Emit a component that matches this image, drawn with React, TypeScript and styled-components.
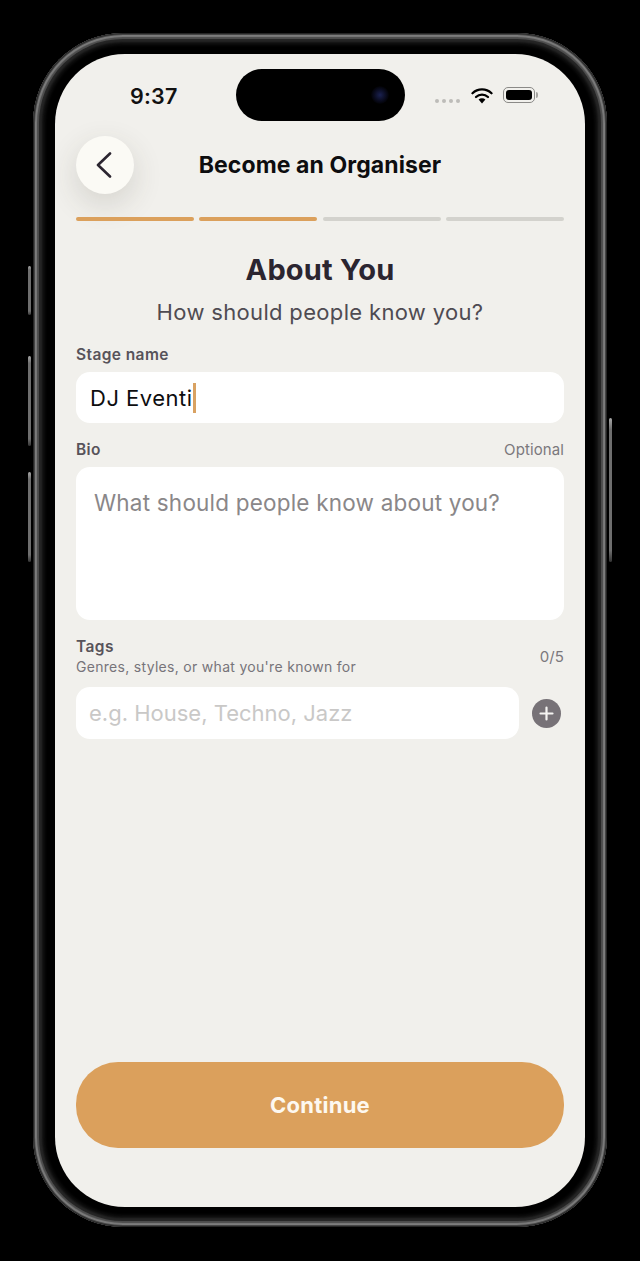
import React from "react";
import styled, { createGlobalStyle } from "styled-components";

const GlobalStyle = createGlobalStyle`
  html, body {
    margin: 0;
    padding: 0;
    background: #000;
    overflow: hidden;
  }
  * {
    box-sizing: border-box;
  }
`;

const Page = styled.div`
  width: 640px;
  height: 1261px;
  padding-top: 33px;
  background: #000;
  font-family: "Inter", "Liberation Sans", sans-serif;
`;

const Frame = styled.div`
  position: relative;
  width: 574px;
  height: 1194px;
  margin: 0 auto;
  padding: 21px 22px 20px;
  border-radius: 90px;
  background: #000;
  box-shadow:
    inset 0 0 1px 1px #222,
    inset 0 0 0 2px #4a4a4a,
    inset 0 0 1px 4px #7c7c7c,
    inset 0 0 0 6px #4c4c4c,
    inset 0 0 2px 9px #262626,
    inset 0 0 3px 12px #101010;
`;

const SideButton = styled.div<{ $side: "left" | "right"; $top: number; $height: number }>`
  position: absolute;
  top: ${(p) => p.$top}px;
  ${(p) => (p.$side === "left" ? "left: -5px;" : "right: -5px;")}
  width: 3px;
  height: ${(p) => p.$height}px;
  border-radius: 2px;
  background: linear-gradient(180deg, #a8a8a8 0, #6e6e6e 8%, #6e6e6e 92%, #333 100%);
`;

const Screen = styled.div`
  position: relative;
  display: flex;
  flex-direction: column;
  height: 100%;
  border-radius: 70px;
  background: #f1f0ec;
  overflow: hidden;
`;

const Island = styled.div`
  position: absolute;
  top: 15px;
  left: 181px;
  width: 169px;
  height: 52px;
  border-radius: 26px;
  background: #000;
`;

const Lens = styled.div`
  position: absolute;
  top: 17px;
  right: 16px;
  width: 18px;
  height: 18px;
  border-radius: 50%;
  background: radial-gradient(circle, #1a2150 0, #0a0c20 45%, #000 75%);
`;

const StatusBar = styled.div`
  display: flex;
  align-items: center;
  height: 82px;
  padding: 2px 50px 0 75px;
`;

const Time = styled.div`
  font-size: 21.5px;
  font-weight: 600;
  color: #111;
  letter-spacing: 0.2px;
`;

const StatusIcons = styled.div`
  display: flex;
  align-items: center;
  margin-left: auto;
  margin-top: -2px;
`;

const SignalDots = styled.div`
  display: flex;
  gap: 2.5px;
  margin-top: 12px;
  margin-right: 11px;
`;

const SignalDot = styled.div`
  width: 4.5px;
  height: 4.5px;
  border-radius: 50%;
  background: #bdbcb9;
`;

const Battery = styled.div`
  position: relative;
  width: 32px;
  height: 16px;
  margin-left: 10px;
  padding: 2px;
  border: 1px solid #8b8a87;
  border-radius: 5px;

  &:after {
    content: "";
    position: absolute;
    top: 4px;
    right: -4px;
    width: 2px;
    height: 6px;
    border-radius: 0 2px 2px 0;
    background: #a5a4a1;
  }
`;

const BatteryFill = styled.div`
  height: 100%;
  border-radius: 3px;
  background: #000;
`;

const Content = styled.div`
  display: flex;
  flex: 1;
  flex-direction: column;
  padding: 0 21px 59px;
`;

const Header = styled.div`
  display: grid;
  grid-template-columns: 58px 1fr 58px;
  align-items: center;
  height: 58px;
`;

const BackButton = styled.div`
  display: flex;
  align-items: center;
  justify-content: center;
  width: 58px;
  height: 58px;
  padding-right: 3px;
  border-radius: 50%;
  background: #fbfaf5;
  box-shadow: 0 10px 30px rgba(60, 55, 45, 0.16);
`;

const HeaderTitle = styled.div`
  text-align: center;
  font-size: 23px;
  font-weight: 700;
  color: #0d0d0f;
  letter-spacing: 0.1px;
`;

const Progress = styled.div`
  display: flex;
  gap: 5.5px;
  margin-top: 23px;
`;

const ProgressStep = styled.div<{ $done?: boolean }>`
  flex: 1;
  height: 4px;
  border-radius: 2px;
  background: ${(p) => (p.$done ? "#dba05c" : "#d3d2cd")};
`;

const Heading = styled.h1`
  margin: 31px 0 0;
  text-align: center;
  font-size: 29px;
  line-height: 36px;
  font-weight: 700;
  color: #2b2530;
  letter-spacing: 0.2px;
`;

const Subheading = styled.div`
  margin-top: 10px;
  text-align: center;
  font-size: 22px;
  line-height: 28px;
  color: #4f4b52;
  letter-spacing: 0.33px;
`;

const LabelRow = styled.div<{ $gap: number }>`
  display: flex;
  align-items: center;
  justify-content: space-between;
  margin-top: ${(p) => p.$gap}px;
  margin-bottom: 8px;
`;

const Label = styled.div`
  font-size: 15.5px;
  line-height: 18px;
  font-weight: 600;
  color: #57535a;
  letter-spacing: 0.4px;
`;

const Hint = styled.div`
  font-size: 14px;
  line-height: 16px;
  color: #77747a;
  margin-top: 3px;
  letter-spacing: 0.3px;
`;

const Note = styled.div`
  font-size: 15px;
  line-height: 18px;
  color: #7b787c;
  letter-spacing: 0.1px;
`;

const StageField = styled.div`
  display: flex;
  align-items: center;
  height: 51px;
  padding: 0 14px;
  border-radius: 14px;
  background: #fff;
  font-size: 22px;
  color: #0d0d0f;
  letter-spacing: 0.5px;
`;

const Caret = styled.span`
  width: 2.5px;
  height: 30px;
  margin-left: 0.5px;
  background: #d9a262;
`;

const BioField = styled.textarea`
  display: block;
  width: 100%;
  height: 153px;
  padding: 21px 18px;
  border: 0;
  border-radius: 14px;
  outline: 0;
  resize: none;
  background: #fff;
  font-family: inherit;
  font-size: 22.5px;
  line-height: 30px;
  letter-spacing: 0.2px;

  &::placeholder {
    color: #8a8789;
    opacity: 1;
  }
`;

const TagRow = styled.div`
  display: flex;
  align-items: center;
  margin-top: 4px;
`;

const TagField = styled.input`
  flex: 1;
  min-width: 0;
  height: 52px;
  padding: 0 13px;
  border: 0;
  border-radius: 14px;
  outline: 0;
  background: #fff;
  font-family: inherit;
  font-size: 22px;

  &::placeholder {
    color: #c9c8c7;
    opacity: 1;
  }
`;

const AddButton = styled.div`
  display: flex;
  align-items: center;
  justify-content: center;
  width: 29px;
  height: 29px;
  margin: 0 3px 0 13px;
  border-radius: 50%;
  background: #777277;
`;

const ContinueButton = styled.div`
  display: flex;
  align-items: center;
  justify-content: center;
  height: 86px;
  margin-top: auto;
  border-radius: 42px;
  background: #dba05c;
  font-size: 22px;
  font-weight: 700;
  color: #fdf8f0;
  letter-spacing: 0.25px;
`;

export default function App() {
  return (
    <Page>
      <GlobalStyle />
      <Frame>
        <SideButton $side="left" $top={233} $height={49} />
        <SideButton $side="left" $top={323} $height={90} />
        <SideButton $side="left" $top={439} $height={90} />
        <SideButton $side="right" $top={385} $height={144} />
        <Screen>
          <Island>
            <Lens />
          </Island>
          <StatusBar>
            <Time>9:37</Time>
            <StatusIcons>
              <SignalDots>
                <SignalDot />
                <SignalDot />
                <SignalDot />
                <SignalDot />
              </SignalDots>
              <svg width="22" height="17" viewBox="0 0 22 17" fill="none">
                <path d="M1.5 6.2a13.6 13.6 0 0 1 19 0" stroke="#000" strokeWidth="2.3" strokeLinecap="round" />
                <path d="M5 10a8.6 8.6 0 0 1 12 0" stroke="#000" strokeWidth="2.3" strokeLinecap="round" />
                <path d="M7.6 12.6 11 16.4l3.4-3.8a4.8 4.8 0 0 0-6.8 0z" fill="#000" />
              </svg>
              <Battery>
                <BatteryFill />
              </Battery>
            </StatusIcons>
          </StatusBar>
          <Content>
            <Header>
              <BackButton>
                <svg width="16" height="26" viewBox="0 0 16 26" fill="none">
                  <path d="M14 1.5 2 13l12 11.5" stroke="#2b2530" strokeWidth="2.6" strokeLinecap="round" strokeLinejoin="round" />
                </svg>
              </BackButton>
              <HeaderTitle>Become an Organiser</HeaderTitle>
            </Header>
            <Progress>
              <ProgressStep $done />
              <ProgressStep $done />
              <ProgressStep />
              <ProgressStep />
            </Progress>
            <Heading>About You</Heading>
            <Subheading>How should people know you?</Subheading>
            <LabelRow $gap={20}>
              <Label>Stage name</Label>
            </LabelRow>
            <StageField>
              DJ Eventi
              <Caret />
            </StageField>
            <LabelRow $gap={18}>
              <Label>Bio</Label>
              <Note>Optional</Note>
            </LabelRow>
            <BioField readOnly placeholder="What should people know about you?" />
            <LabelRow $gap={18}>
              <div>
                <Label>Tags</Label>
                <Hint>Genres, styles, or what you're known for</Hint>
              </div>
              <Note>0/5</Note>
            </LabelRow>
            <TagRow>
              <TagField readOnly placeholder="e.g. House, Techno, Jazz" />
              <AddButton>
                <svg width="15" height="15" viewBox="0 0 15 15" fill="none">
                  <path d="M7.5 1.5v12M1.5 7.5h12" stroke="#f5f4f2" strokeWidth="2.2" strokeLinecap="round" />
                </svg>
              </AddButton>
            </TagRow>
            <ContinueButton>Continue</ContinueButton>
          </Content>
        </Screen>
      </Frame>
    </Page>
  );
}
